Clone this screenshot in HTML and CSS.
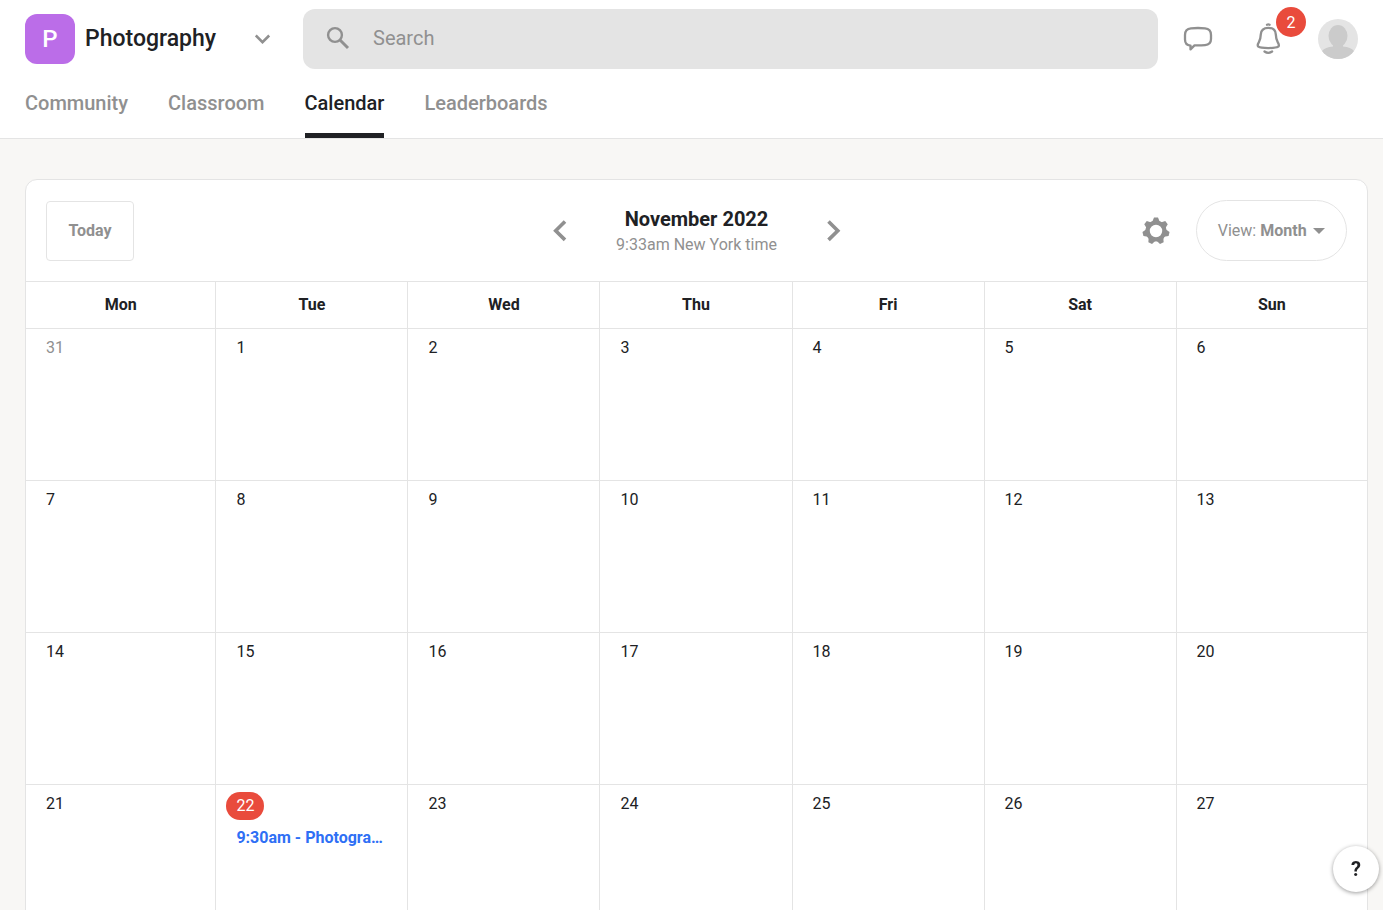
FILE: index.html
```html
<!DOCTYPE html>
<html lang="en">
    <head>
        <meta charset="utf-8">
        <meta name="viewport" content="width=device-width, initial-scale=1.0">
        <title>Photography - Calendar</title>
        <link rel="stylesheet" href="styles.css">
    </head>
    <body>
        <header class="header">
            <div class="topbar">
                <button class="group" type="button">
                    <span class="group-logo">P</span>
                    <span class="group-name">Photography</span>
                    <svg class="group-arrow" width="16" height="10" viewBox="0 0 16 10" fill="none" stroke="#909090" stroke-width="2.6"><path d="M.8 1.500 7.500 8.200l6.700-6.700"/></svg>
                </button>

                <form class="search" role="search">
                    <svg width="24" height="24" viewBox="0 0 24 24" fill="none" stroke="#909090"><circle cx="9" cy="9" r="6.9" stroke-width="2.4"/><path d="M14 14l8 8" stroke-width="3"/></svg>
                    <input type="search" placeholder="Search" aria-label="Search">
                </form>

                <div class="actions">
                    <button class="icon-btn chat" type="button" aria-label="Chat">
                        <svg width="30" height="26" viewBox="0 0 30 26" fill="none" stroke="#909090" stroke-width="2.3" stroke-linejoin="round"><path d="M7.500 19.600v3.800l4-4q5.500.2 10.500-.3 6-.5 6-6.100V9q0-6-6-6.600-7-.8-14 0Q2 3 2 9v4.500q0 5.700 5.500 6.100z"/></svg>
                    </button>
                    <button class="icon-btn bell" type="button" aria-label="Notifications">
                        <svg width="24" height="32" viewBox="0 0 24 32" fill="none" stroke="#909090" stroke-width="2.300" stroke-linecap="round" stroke-linejoin="round"><path d="M11 1.700q1.300-.6 2.600 0"/><path d="M12.300 4.800c-5.300 0-7.300 2.600-7.500 6.600-.2 4.500-.6 5.600-1.900 7.800-1.300 2.200-1.400 3.900-.4 4.500 2.300 1.800 17.300 1.800 19.600 0 1-.6.9-2.300-.4-4.500-1.300-2.200-1.700-3.300-1.900-7.800-.2-4-2.200-6.600-7.500-6.600z"/><path d="M8.500 28.500q3.800 2.700 7.600 0"/></svg>
                        <span class="badge">2</span>
                    </button>
                    <button class="icon-btn avatar" type="button" aria-label="Profile">
                        <svg width="40" height="40" viewBox="0 0 40 40"><path d="M0 0h40v40H0z" fill="#e4e4e4"/><ellipse cx="20" cy="17" rx="9.500" ry="11" fill="#cbcbcb"/><path d="M15 24h10v3.500q8 .5 11 4.500v8H4v-8q3-4 11-4.500z" fill="#cbcbcb"/></svg>
                    </button>
                </div>
            </div>

            <nav class="tabs">
                <a href="#community">Community</a>
                <a href="#classroom">Classroom</a>
                <a href="#calendar" class="active">Calendar</a>
                <a href="#leaderboards">Leaderboards</a>
            </nav>
        </header>

        <main class="content">
            <section class="calendar">
                <div class="toolbar">
                    <div class="toolbar-left">
                        <button class="today" type="button">Today</button>
                    </div>
                    <div class="toolbar-center">
                        <button class="icon-btn" type="button" aria-label="Previous month">
                            <svg width="14" height="22" viewBox="0 0 14 22" fill="none" stroke="#909090" stroke-width="3.600"><path d="M12 1.500 2.700 10.700l9.300 9.200"/></svg>
                        </button>
                        <div class="month">
                            <h1>November 2022</h1>
                            <p>9:33am New York time</p>
                        </div>
                        <button class="icon-btn" type="button" aria-label="Next month">
                            <svg width="14" height="22" viewBox="0 0 14 22" fill="none" stroke="#909090" stroke-width="3.600"><path d="m1.500 1.500 9.300 9.200-9.300 9.200"/></svg>
                        </button>
                    </div>
                    <div class="toolbar-right">
                        <button class="icon-btn" type="button" aria-label="Settings">
                            <svg width="28" height="28" viewBox="-14 -14 28 28" fill="#909090">
                                <circle r="8.400" fill="none" stroke="#909090" stroke-width="4.400"/>
                                <path id="tooth" d="M-3.800-9-2-13.400H2L3.800-9z"/>
                                <use href="#tooth" transform="rotate(51.430)"/>
                                <use href="#tooth" transform="rotate(102.860)"/>
                                <use href="#tooth" transform="rotate(154.290)"/>
                                <use href="#tooth" transform="rotate(205.710)"/>
                                <use href="#tooth" transform="rotate(257.140)"/>
                                <use href="#tooth" transform="rotate(308.570)"/>
                            </svg>
                        </button>
                        <div class="view">
                            <label for="view">View:</label>
                            <select id="view">
                                <option>Month</option>
                                <option>Week</option>
                                <option>Day</option>
                            </select>
                            <svg width="12" height="6" viewBox="0 0 12 6" fill="#909090"><path d="M0 0h12L6 6z"/></svg>
                        </div>
                    </div>
                </div>

                <table class="days">
                    <thead>
                        <tr><th>Mon</th><th>Tue</th><th>Wed</th><th>Thu</th><th>Fri</th><th>Sat</th><th>Sun</th></tr>
                    </thead>
                    <tbody>
                        <tr><td class="other">31</td><td>1</td><td>2</td><td>3</td><td>4</td><td>5</td><td>6</td></tr>
                        <tr><td>7</td><td>8</td><td>9</td><td>10</td><td>11</td><td>12</td><td>13</td></tr>
                        <tr><td>14</td><td>15</td><td>16</td><td>17</td><td>18</td><td>19</td><td>20</td></tr>
                        <tr>
                            <td>21</td>
                            <td class="current">
                                <span class="current-day">22</span>
                                <a class="event" href="#event">9:30am - Photography</a>
                            </td>
                            <td>23</td><td>24</td><td>25</td><td>26</td><td>27</td>
                        </tr>
                    </tbody>
                </table>
            </section>
        </main>

        <button class="help" type="button" aria-label="Help">?</button>
    </body>
</html>
```

FILE: styles.css
```css
* {
    box-sizing: border-box;
}

body {
    margin: 0;
    height: 100vh;
    display: flex;
    flex-direction: column;
    background: #f8f7f5;
    color: #202124;
    font-family: Roboto, "Liberation Sans", sans-serif;
    font-size: 16px;
    line-height: 20px;
}

button,
input,
select {
    margin: 0;
    padding: 0;
    border: 0;
    background: none;
    color: inherit;
    font: inherit;
}

button {
    cursor: pointer;
}

svg {
    display: block;
}

/* Header */

.header {
    flex: none;
    padding: 0 25px;
    background: #fff;
    border-bottom: 1px solid #e4e4e4;
}

.topbar {
    display: flex;
    align-items: center;
    height: 78px;
}

.group {
    display: flex;
    align-items: center;
    gap: 10px;
    width: 246px;
    margin-right: 32px;
}

.group-logo {
    width: 50px;
    height: 50px;
    border-radius: 12px;
    background: #bb6de8;
    color: #fff;
    font-size: 24px;
    font-weight: 500;
    line-height: 50px;
}

.group-name {
    font-size: 23px;
    font-weight: 500;
    line-height: 50px;
}

.group-arrow {
    margin-left: auto;
}

.search {
    flex: 1;
    display: flex;
    align-items: center;
    gap: 23px;
    height: 60px;
    padding: 0 23px 2px;
    border-radius: 12px;
    background: #e4e4e4;
}

.search input {
    flex: 1;
    height: 56px;
    outline: 0;
    font-size: 20px;
}

.search input::placeholder {
    color: #909090;
}

.actions {
    display: flex;
    align-items: center;
    margin-left: 25px;
}

.bell {
    position: relative;
    margin: 0 38px 0 43px;
}

.badge {
    position: absolute;
    top: -16px;
    left: 20px;
    width: 30px;
    height: 30px;
    border-radius: 50%;
    background: #e94b3c;
    color: #fff;
    line-height: 32px;
}

.avatar {
    border-radius: 50%;
    overflow: hidden;
}

.tabs {
    display: flex;
    gap: 40px;
}

.tabs a {
    height: 60px;
    border-bottom: 5px solid transparent;
    color: #909090;
    font-size: 20px;
    font-weight: 500;
    line-height: 50px;
    text-decoration: none;
}

.tabs a.active {
    border-color: #202124;
    color: #202124;
}

/* Calendar */

.content {
    flex: 1;
    min-height: 0;
    padding: 40px 15px 40px 25px;
    overflow-y: auto;
    scrollbar-width: none;
}

.calendar {
    background: #fff;
    border: 1px solid #e4e4e4;
    border-radius: 12px;
    overflow: hidden;
}

.toolbar {
    display: grid;
    grid-template-columns: 1fr auto 1fr;
    align-items: center;
    padding: 20px;
}

.today {
    min-width: 88px;
    height: 60px;
    padding: 0 20px;
    border: 1px solid #e4e4e4;
    border-radius: 4px;
    color: #909090;
    font-weight: 700;
}

.toolbar-center {
    display: flex;
    align-items: center;
}

.month {
    width: 260px;
    padding-top: 2px;
    text-align: center;
}

.month h1 {
    margin: 0 0 2px;
    font-size: 20px;
    font-weight: 700;
    line-height: 24px;
}

.month p {
    margin: 0;
    color: #909090;
    line-height: 24px;
}

.toolbar-right {
    display: flex;
    justify-content: flex-end;
    align-items: center;
    gap: 26px;
}

.view {
    display: flex;
    align-items: center;
    justify-content: center;
    min-width: 151px;
    height: 61px;
    padding: 0 20px;
    border: 1px solid #e4e4e4;
    border-radius: 31px;
    color: #909090;
}

.view select {
    appearance: none;
    margin: 0 6px 0 4px;
    outline: 0;
    font-weight: 700;
}

.days {
    width: 100%;
    border-spacing: 0;
    table-layout: fixed;
}

.days th,
.days td {
    border: solid #e4e4e4;
    border-width: 1px 1px 0 0;
}

.days th {
    height: 47px;
    padding: 0;
    font-weight: 700;
}

.days th:first-child,
.days th:last-child {
    width: 14.2%;
}

.days td {
    height: 152px;
    padding: 9px 20px;
    vertical-align: top;
}

.days tr > :last-child {
    border-right: 0;
}

.days .other {
    color: #909090;
}

.days .current {
    padding: 7px 20px 7px 10px;
}

.current-day {
    display: block;
    width: max-content;
    padding: 0 10px;
    border-radius: 14px;
    background: #e94b3c;
    color: #fff;
    line-height: 28px;
}

.event {
    display: block;
    margin: 8px 0 0 10px;
    overflow: hidden;
    color: #2e6ff5;
    font-weight: 700;
    text-decoration: none;
    text-overflow: ellipsis;
    white-space: nowrap;
}

.help {
    position: fixed;
    right: 4px;
    bottom: 18px;
    width: 46px;
    height: 46px;
    border-radius: 50%;
    background: #fff;
    box-shadow: 0 1px 4px rgba(0, 0, 0, 0.4);
    font-size: 20px;
    font-weight: 700;
}
```
